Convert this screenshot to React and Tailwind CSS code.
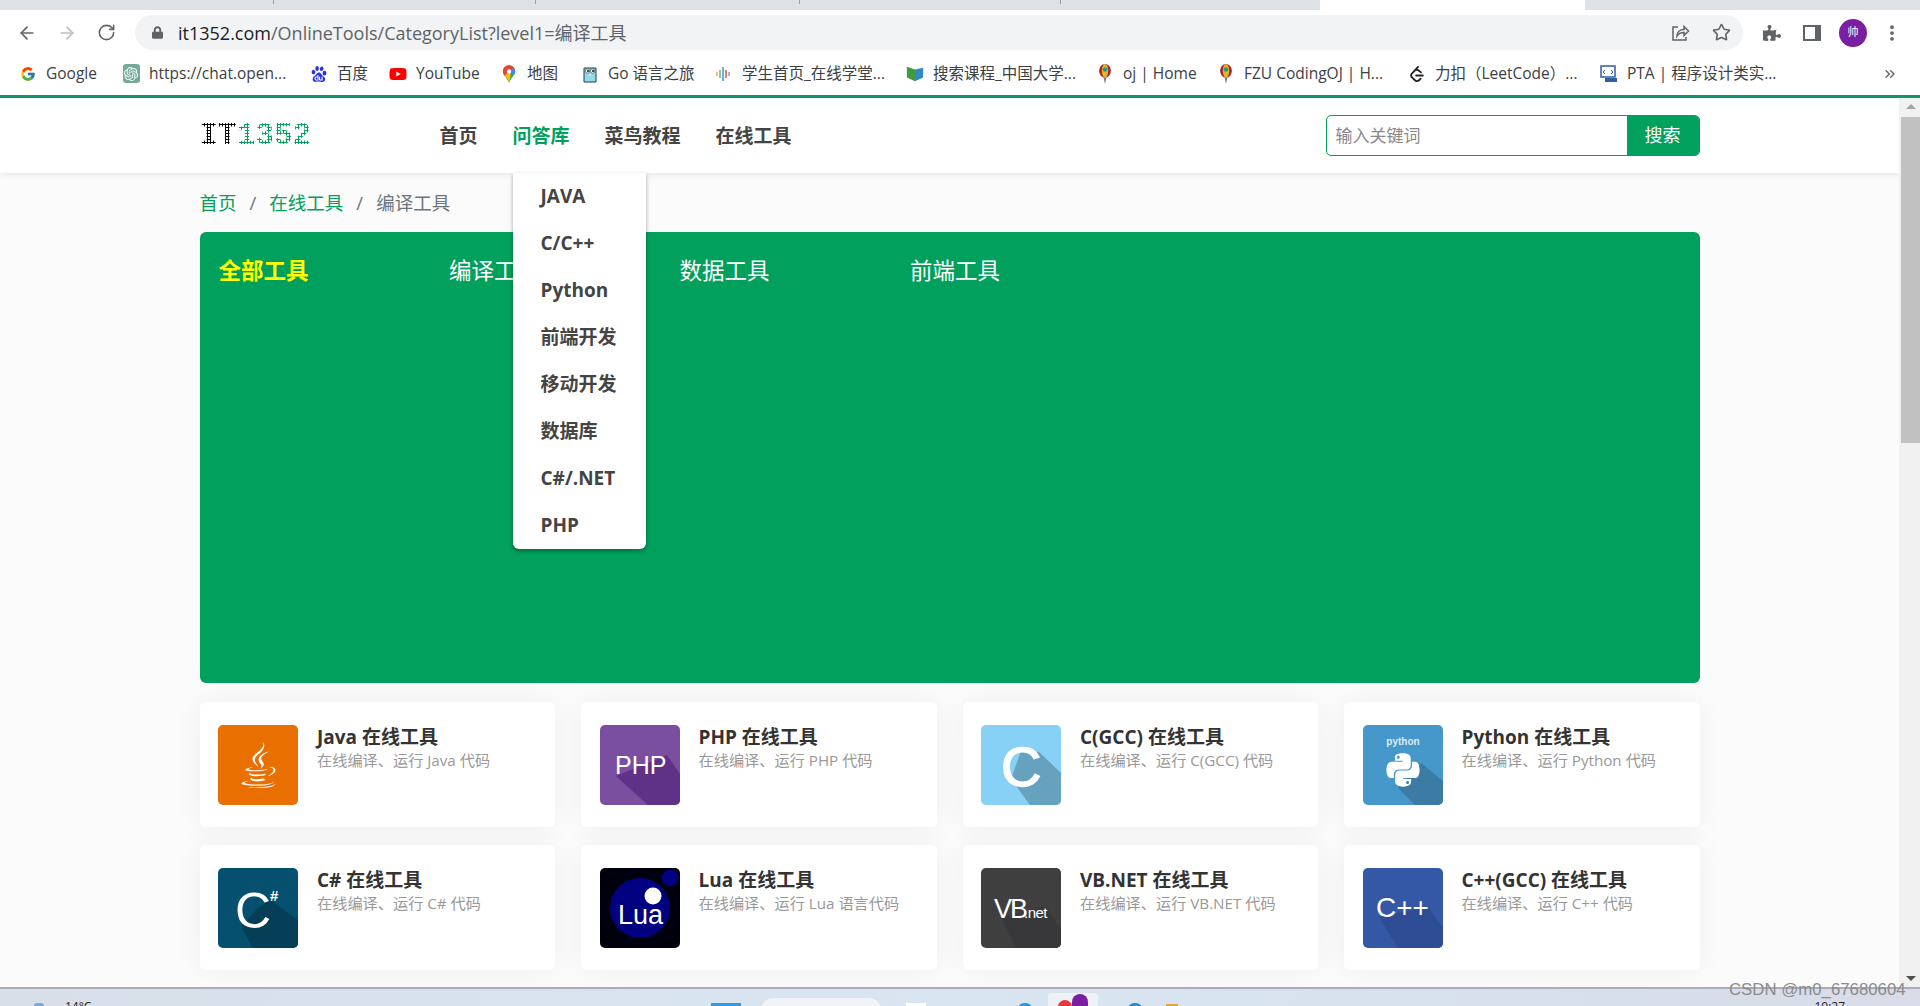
import React from 'react';
import { ArrowLeft, ArrowRight, RotateCw, Star, MoreVertical, ChevronsRight } from 'lucide-react';
import { FaJava, FaPython, FaLock, FaPuzzlePiece, FaYoutube } from 'react-icons/fa';
import { FcGoogle } from 'react-icons/fc';
import { SiOpenai, SiBaidu, SiLeetcode } from 'react-icons/si';

const sans = { fontFamily: '"Open Sans", "Noto Sans CJK SC", sans-serif' };

function MapsPin() {
  return (
    <svg viewBox="0 0 16 20" className="w-[14px] h-[18px]">
      <path d="M8 0a7 7 0 0 1 7 7c0 4-4 6-7 13C5 13 1 11 1 7a7 7 0 0 1 7-7z" fill="#34a853" />
      <path d="M8 0a7 7 0 0 1 6 3.500L3 12C2 10.500 1 9 1 7a7 7 0 0 1 7-7z" fill="#ea4335" />
      <path d="M14 3.500a7 7 0 0 1 1 3.500c0 1.500-.6 2.800-1.500 4L6 6z" fill="#4285f4" />
      <path d="M3 12l5-5 2 4-2 9c-1-3-3-6-5-8z" fill="#fbbc04" />
      <circle cx="8" cy="7" r="2.500" fill="#fff" />
    </svg>
  );
}

function Gopher() {
  return (
    <svg viewBox="0 0 16 18" className="w-4 h-[18px]">
      <path d="M2 3h12v14H2z" fill="#8fdcf0" stroke="#2b3a42" strokeWidth="1" />
      <circle cx="5.500" cy="6" r="2.200" fill="#fff" stroke="#2b3a42" strokeWidth=".6" />
      <circle cx="10.500" cy="6" r="2.200" fill="#fff" stroke="#2b3a42" strokeWidth=".6" />
      <circle cx="6" cy="6" r="1" fill="#111" />
      <circle cx="11" cy="6" r="1" fill="#111" />
      <path d="M7 9h2v2H7z" fill="#f4e3c0" />
    </svg>
  );
}

function Bars() {
  return (
    <svg viewBox="0 0 18 16" className="w-[18px] h-4">
      <path d="M2 6v4" stroke="#e8b04a" strokeWidth="1.500" />
      <path d="M5 4v8" stroke="#5fb878" strokeWidth="1.500" />
      <path d="M8 1v14" stroke="#4a90d9" strokeWidth="1.500" />
      <path d="M11 4v8" stroke="#d9534f" strokeWidth="1.500" />
      <path d="M14 6v4" stroke="#9b8fd0" strokeWidth="1.500" />
    </svg>
  );
}

function Book() {
  return (
    <svg viewBox="0 0 20 18" className="w-5 h-[18px]">
      <path d="M1 1l9 3v13l-9-4z" fill="#3f9b3f" />
      <path d="M10 4l9-2v11l-9 4z" fill="#2f88c8" />
    </svg>
  );
}

function Balloon() {
  return (
    <svg viewBox="0 0 14 22" className="w-[14px] h-[20px]">
      <path d="M7 22l-1.500-7h3z" fill="#777" />
      <ellipse cx="7" cy="7.500" rx="6.500" ry="7.500" fill="#a8262c" />
      <ellipse cx="7" cy="7.500" rx="3.500" ry="7.500" fill="#e3b52c" />
      <circle cx="7" cy="6" r="2.500" fill="#1f9c8c" />
    </svg>
  );
}

function Pta() {
  return (
    <svg viewBox="0 0 18 18" className="w-[18px] h-[18px]">
      <path d="M1 1h14v11H1z" fill="#fff" stroke="#2c5fa8" strokeWidth="1.500" />
      <path d="M5 13h12v4H5z" fill="#2c5fa8" />
      <path d="M5 5l-2 2 2 2M11 5l2 2-2 2" fill="none" stroke="#2c5fa8" strokeWidth="1" />
    </svg>
  );
}

const bookmarks = [
  { w: 'w-[103px]', label: 'Google', icon: <FcGoogle className="w-4 h-4" /> },
  {
    w: 'w-[188px]',
    label: 'https://chat.open...',
    icon: (
      <span className="w-[17px] h-[19px] rounded-[3px] bg-[#74aa9c] flex items-center justify-center">
        <SiOpenai className="w-[14px] h-[14px] text-white" />
      </span>
    ),
  },
  { w: 'w-[79px]', label: '百度', icon: <SiBaidu className="w-4 h-[18px] text-[#2932e1]" /> },
  {
    w: 'w-[111px]',
    label: 'YouTube',
    icon: <FaYoutube className="w-5 h-[18px] text-[#ff0000]" />,
  },
  { w: 'w-[81px]', label: '地图', icon: <MapsPin /> },
  { w: 'w-[134px]', label: 'Go 语言之旅', icon: <Gopher /> },
  { w: 'w-[191px]', label: '学生首页_在线学堂...', icon: <Bars /> },
  { w: 'w-[190px]', label: '搜索课程_中国大学...', icon: <Book /> },
  { w: 'w-[121px]', label: 'oj | Home', icon: <Balloon /> },
  { w: 'w-[191px]', label: 'FZU CodingOJ | H...', icon: <Balloon /> },
  {
    w: 'w-[192px]',
    label: '力扣（LeetCode）...',
    icon: <SiLeetcode className="w-4 h-[18px] text-[#222]" />,
  },
  { w: 'w-[180px]', label: 'PTA | 程序设计类实...', icon: <Pta /> },
];

const navLinks = ['JAVA', 'C/C++', 'Python', '前端开发', '移动开发', '数据库', 'C#/.NET', 'PHP'];
const tabs = ['全部工具', '编译工具', '数据工具', '前端工具'];

const sansSvg = '"Liberation Sans", sans-serif';

function ToolIcon({ bg, shadow, points, children }) {
  return (
    <div className={`w-20 h-20 rounded-[5px] overflow-hidden shrink-0 relative flex items-center justify-center ${bg}`}>
      {points && (
        <svg viewBox="0 0 80 80" className="absolute inset-0 w-20 h-20">
          <polygon points={points} fill={shadow} />
        </svg>
      )}
      {children}
    </div>
  );
}

function SvgLabel({ children }) {
  return (
    <svg viewBox="0 0 80 80" className="absolute inset-0 w-20 h-20" fontFamily={sansSvg} fill="#fff">
      {children}
    </svg>
  );
}

const tools = [
  {
    name: 'Java',
    sub: 'Java 代码',
    icon: (
      <ToolIcon bg="bg-[#e86f00]">
        <FaJava className="w-[35px] h-[46px] text-white" />
      </ToolIcon>
    ),
  },
  {
    name: 'PHP',
    sub: 'PHP 代码',
    icon: (
      <ToolIcon bg="bg-[#7b4f9f]" shadow="#5f3187" points="16,51 67,30 80,49 80,80 48,80">
        <SvgLabel>
          <text x="15" y="49" fontSize="25">PHP</text>
        </SvgLabel>
      </ToolIcon>
    ),
  },
  {
    name: 'C(GCC)',
    sub: 'C(GCC) 代码',
    icon: (
      <ToolIcon bg="bg-[#87d0f6]" shadow="#66a1be" points="40,26 58,27 80,48 80,80 49,80 30,54">
        <SvgLabel>
          <text x="20" y="61" fontSize="56" stroke="#fff" strokeWidth="1.500">C</text>
        </SvgLabel>
      </ToolIcon>
    ),
  },
  {
    name: 'Python',
    sub: 'Python 代码',
    icon: (
      <ToolIcon bg="bg-[#4698cb]" shadow="#3c7ca4" points="58,38 80,56 80,80 52,80 35,63">
        <SvgLabel>
          <text x="40" y="20" fontSize="10" fontWeight="700" textAnchor="middle" fill="#dcebf5">python</text>
        </SvgLabel>
        <FaPython className="absolute left-[21px] top-[26px] w-[38px] h-[38px] text-white" />
      </ToolIcon>
    ),
  },
  {
    name: 'C#',
    sub: 'C# 代码',
    icon: (
      <ToolIcon bg="bg-[#04506e]" shadow="#043f57" points="52,32 80,52 80,80 35,80 23,59 40,40">
        <SvgLabel>
          <text x="17" y="60" fontSize="50">C</text>
          <text x="52" y="33" fontSize="15" fontWeight="700">#</text>
        </SvgLabel>
      </ToolIcon>
    ),
  },
  {
    name: 'Lua',
    sub: 'Lua 语言代码',
    icon: (
      <ToolIcon bg="bg-[#00000c]">
        <SvgLabel>
          <circle cx="40" cy="40" r="36" fill="none" stroke="#000060" strokeWidth=".7" strokeDasharray="2 2" />
          <circle cx="40" cy="40" r="30" fill="#000080" />
          <circle cx="70" cy="10" r="8.500" fill="#000080" />
          <circle cx="53" cy="28" r="8.500" fill="#fff" />
          <text x="18" y="56" fontSize="27">Lua</text>
        </SvgLabel>
      </ToolIcon>
    ),
  },
  {
    name: 'VB.NET',
    sub: 'VB.NET 代码',
    icon: (
      <ToolIcon bg="bg-[#3f3f40]" shadow="#38383a" points="20,50 65,38 80,62 80,80 35,80">
        <SvgLabel>
          <text x="13" y="50" fontSize="27" letterSpacing="-2">VB</text>
          <text x="43" y="50" fontSize="15" letterSpacing="-.5">.net</text>
        </SvgLabel>
      </ToolIcon>
    ),
  },
  {
    name: 'C++(GCC)',
    sub: 'C++ 代码',
    icon: (
      <ToolIcon bg="bg-[#3457a6]" shadow="#2f4d94" points="16,49 65,39 80,60 80,80 35,80">
        <SvgLabel>
          <text x="13" y="49" fontSize="28">C++</text>
        </SvgLabel>
      </ToolIcon>
    ),
  },
];

function ShareIcon() {
  return (
    <svg viewBox="0 0 20 20" className="w-5 h-5" fill="none" stroke="#5f6368" strokeWidth="1.500">
      <path d="M8 4H3v13h13v-3" />
      <path d="M7 13c0-4 3-6.500 7-6.500V3.500l4.500 4.500-4.500 4.500V9.500c-3 0-5.500 1-7 3.500z" />
    </svg>
  );
}

function Logo() {
  return (
    <div className="w-[112px] text-[31px] leading-none font-bold flex" style={{ fontFamily: '"Liberation Mono", monospace' }}>
      <span className="bg-[radial-gradient(circle,#000_1.200px,transparent_1.400px)] bg-[length:3px_3px] bg-clip-text text-transparent">IT</span>
      <span className="bg-[radial-gradient(circle,#00a05d_1.100px,transparent_1.300px)] bg-[length:3px_3px] bg-clip-text text-transparent">1352</span>
    </div>
  );
}

export default function App() {
  return (
    <div className="h-screen overflow-hidden flex flex-col relative bg-white" style={sans}>
      {/* tab strip */}
      <div className="h-[10px] bg-[#dee1e6] flex shrink-0">
        <div className="ml-[273px] w-px h-[4px] bg-[#9aa0a6]" />
        <div className="ml-[261px] w-px h-[4px] bg-[#9aa0a6]" />
        <div className="ml-[263px] w-px h-[4px] bg-[#9aa0a6]" />
        <div className="ml-[260px] w-px h-[4px] bg-[#9aa0a6]" />
        <div className="ml-[259px] w-[265px] h-[10px] bg-white" />
      </div>

      {/* toolbar */}
      <div className="h-[40px] shrink-0 flex items-start bg-white">
        <div className="w-[135px] h-[35px] mt-[5px] flex items-center pl-[17px] gap-[20px]">
          <ArrowLeft className="w-5 h-5 text-[#5f6368]" strokeWidth={2} />
          <ArrowRight className="w-5 h-5 text-[#bcbec1]" strokeWidth={2} />
          <RotateCw className="w-[19px] h-[19px] text-[#5f6368]" strokeWidth={2} />
        </div>
        <div className="w-[1608px] h-[35px] mt-[5px] rounded-full bg-[#f1f3f4] flex items-center pl-[17px] pr-[12px]">
          <FaLock className="w-[11px] h-[13px] text-[#5f6368]" />
          <div className="ml-[15px] text-[18px] leading-none whitespace-nowrap text-[#5f6368]">
            <span className="text-[#202124]">it1352.com</span>/OnlineTools/CategoryList?level1=编译工具
          </div>
          <div className="ml-auto flex items-center gap-[22px]">
            <ShareIcon />
            <Star className="w-[19px] h-[19px] text-[#5f6368]" strokeWidth={2} />
          </div>
        </div>
        <div className="h-[35px] mt-[5px] flex items-center pl-[20px]">
          <FaPuzzlePiece className="w-[18px] h-[18px] text-[#5f6368]" />
          <div className="ml-[22px] w-[18px] h-[16px] border-2 border-r-[6px] border-[#5f6368]" />
          <div className="ml-[18px] w-[28px] h-[28px] rounded-full bg-[#7b1fa2] text-white text-[11px] flex items-center justify-center">帅</div>
          <MoreVertical className="ml-[15px] w-5 h-5 text-[#5f6368]" strokeWidth={2.500} />
        </div>
      </div>

      {/* bookmarks */}
      <div className="h-[45px] shrink-0 flex items-center pl-[19px] pt-[2px] bg-white relative">
        {bookmarks.map((b) => (
          <div key={b.label} className={`${b.w} shrink-0 flex items-center gap-[9px] text-[15.500px] text-[#3c4043] whitespace-nowrap`}>
            <span className="w-[18px] flex justify-center shrink-0">{b.icon}</span>
            <span className="truncate">{b.label}</span>
          </div>
        ))}
        <ChevronsRight className="w-4 h-4 ml-auto mr-[22px] text-[#5f6368]" />
      </div>

      {/* browser viewport */}
      <div className="flex-1 min-h-0 flex border-t-[3px] border-[#0a9a63]">
        <div className="flex-1 min-w-0 bg-[#fbfbfb] overflow-hidden">
          <header className="h-[75px] bg-white shadow-[0_2px_6px_rgba(0,0,0,0.08)] relative z-10">
            <div className="w-[1500px] mx-auto h-full flex items-center">
              <Logo />
              <nav className="ml-[128px] flex items-center gap-[35px] text-[19px] font-bold text-[#444]">
                <a className="h-[75px] pt-[2px] flex items-center">首页</a>
                <div className="relative h-[75px] pt-[2px] flex items-center text-[#00a05d]">
                  问答库
                  <div className="absolute left-0 top-full w-[133px] h-[376px] bg-white rounded-b-[6px] shadow-[0_2px_4px_rgba(0,0,0,0.35)] text-[#444] pl-[28px]">
                    {navLinks.map((n) => (
                      <div key={n} className="h-[47px] flex items-center">{n}</div>
                    ))}
                  </div>
                </div>
                <a className="h-[75px] pt-[2px] flex items-center">菜鸟教程</a>
                <a className="h-[75px] pt-[2px] flex items-center">在线工具</a>
              </nav>
              <div className="ml-auto w-[374px] h-[41px] flex rounded-[5px] border border-[#00a05d] overflow-hidden bg-white">
                <div className="flex-1 pl-[9px] flex items-center text-[17px] text-[#888]">输入关键词</div>
                <button className="w-[72px] bg-[#00a05d] text-white text-[18px]">搜索</button>
              </div>
            </div>
          </header>

          <main className="w-[1500px] mx-auto">
            <div className="h-[59px] flex items-center text-[18.500px] text-[#6c757d]">
              <a className="text-[#00a05d]">首页</a>
              <span className="mx-[13px]">/</span>
              <a className="text-[#00a05d]">在线工具</a>
              <span className="mx-[13px]">/</span>
              <span>编译工具</span>
            </div>

            <div className="h-[451px] rounded-[6px] bg-[#01a05c] pl-[19px] pt-[21px] flex items-start">
              {tabs.map((t, i) => (
                <div key={t} className={`w-[230.500px] text-[22.500px] leading-[36px] ${i === 0 ? 'font-bold text-[#ffff00]' : 'text-white'}`}>
                  {t}
                </div>
              ))}
            </div>

            <div className="mt-[19px] grid grid-cols-4 gap-x-[26px] gap-y-[18px]">
              {tools.map((t) => (
                <div key={t.name} className="h-[125px] bg-white rounded-[6px] shadow-[0_0_30px_rgba(0,0,0,0.05)] pl-[18.500px] pt-[23px] flex items-start">
                  {t.icon}
                  <div className="ml-[19px]">
                    <div className="text-[19px] leading-[24px] font-bold text-[#333] whitespace-nowrap">{t.name} 在线工具</div>
                    <div className="text-[15.200px] leading-[20px] mt-[1px] text-[#999] whitespace-nowrap">在线编译、运行 {t.sub}</div>
                  </div>
                </div>
              ))}
            </div>
          </main>
        </div>

        {/* scrollbar */}
        <div className="w-[21px] shrink-0 bg-[#f1f1f1] flex flex-col items-center pl-[2px]">
          <div className="h-[17px] flex items-center">
            <div className="w-0 h-0 border-x-[5px] border-x-transparent border-b-[5px] border-b-[#a3a3a3]" />
          </div>
          <div className="w-full h-[326px] bg-[#c1c1c1] mt-[2px]" />
          <div className="mt-auto h-[17px] flex items-center">
            <div className="w-0 h-0 border-x-[5px] border-x-transparent border-t-[5px] border-t-[#505050]" />
          </div>
        </div>
      </div>

      {/* taskbar, cut off by the capture */}
      <div className="h-[19px] shrink-0 border-t-2 border-[#aaadb3] bg-gradient-to-r from-[#d8dfe9] via-[#d8e6f2] to-[#d7dce8] overflow-hidden flex items-start">
        <div className="ml-[34px] mt-[14px] w-[10px] h-[6px] rounded-full bg-[#7ba9e0]" />
        <div className="ml-[21px] mt-[11px] text-[12px] leading-[14px] text-[#222]">14°C</div>
        <div className="ml-[620px] mt-[14px] w-[30px] h-[6px] bg-[#2f9be8]" />
        <div className="ml-[20px] mt-[9px] w-[120px] h-[12px] rounded-t-full bg-[#f0f3f8]" />
        <div className="ml-[25px] mt-[14px] w-[20px] h-[6px] bg-white" />
        <div className="ml-[92px] mt-[14px] w-[14px] h-[6px] rounded-t-full bg-[#1d9bf0]" />
        <div className="ml-[16px] mt-[4px] w-[50px] h-[20px] rounded-t-[4px] bg-[#eef1f6] flex justify-center items-start pt-[1px]">
          <div className="w-[14px] h-[14px] mt-[6px] rounded-full bg-[#e53935]" />
          <div className="w-[16px] h-[20px] rounded-t-full bg-[#7b1fa2]" />
        </div>
        <div className="ml-[30px] mt-[14px] w-[14px] h-[6px] rounded-t-full bg-[#1b8fd8]" />
        <div className="ml-[24px] mt-[15px] w-[12px] h-[6px] bg-[#e8a33a]" />
        <div className="ml-[636px] mt-[11px] text-[12px] leading-[14px] text-[#222]">10:27</div>
      </div>

      {/* csdn watermark */}
      <div className="absolute left-[1729px] top-[980px] text-[16.800px] leading-5 text-[#8b8b8b] whitespace-nowrap" style={{ fontFamily: '"Liberation Sans", sans-serif' }}>
        CSDN @m0_67680604
      </div>
    </div>
  );
}
